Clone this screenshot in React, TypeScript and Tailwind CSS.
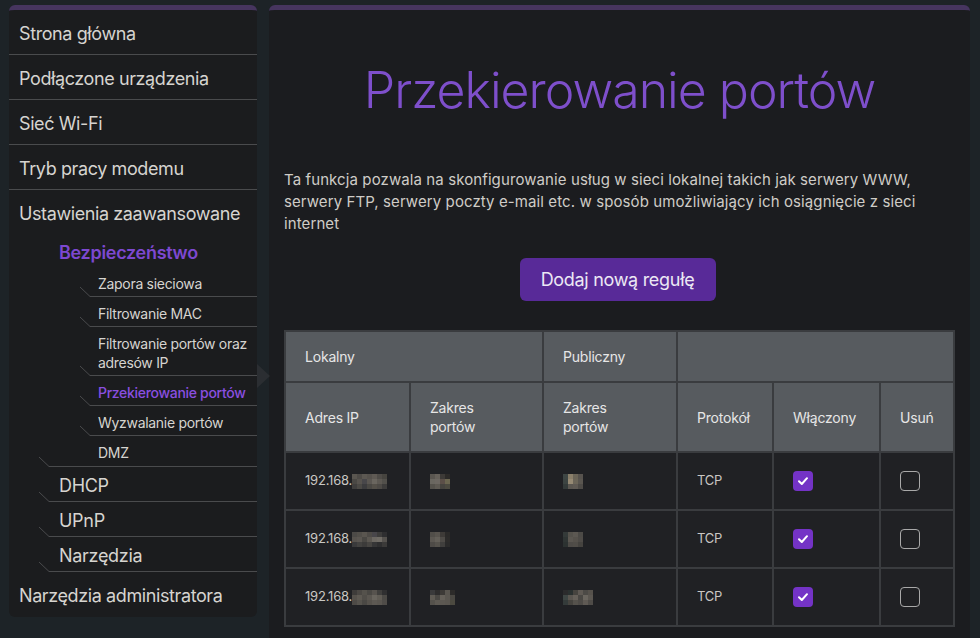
import React from "react";

const font = { fontFamily: "Inter, 'Noto Sans', sans-serif" };

type Mosaic = string[][];

const ipBlur: Mosaic[] = [
  [
    ["#5a5650", "#4e4b47", "#5c5852", "#56524d", "#5f5a54", "#4f4c48", "#46443f"],
    ["#4a4844", "#57534e", "#48474a", "#5b5752", "#6a665f", "#5d5953", "#52504b"],
    ["#3f3e3d", "#4b4945", "#3c3c3e", "#4a4844", "#545049", "#4d4a46", "#3d3c3b"],
  ],
  [
    ["#4c4a47", "#524f4a", "#5a5650", "#4e4b47", "#48464a", "#3d3c3b", "#2e2e30"],
    ["#57534e", "#5b5752", "#4a4844", "#5c5852", "#6c6862", "#706c66", "#55524e"],
    ["#3a3a3b", "#434240", "#3c3b3a", "#474542", "#363637", "#2f2f30", "#3b3a39"],
  ],
  [
    ["#3e3c3a", "#4b4844", "#55524c", "#4a4844", "#57534e", "#403f3d", "#2f2f30"],
    ["#56524c", "#5e5a53", "#514e49", "#5b5751", "#69655e", "#605c55", "#4c4a46"],
    ["#4d4a46", "#56534d", "#4a4844", "#56524c", "#5d5953", "#5a5650", "#4f4c48"],
  ],
];

const localBlur: Mosaic[] = [
  [
    ["#5a5650", "#66615a", "#3d3a37", "#2c2a28"],
    ["#6a6760", "#6d6862", "#5b4f48", "#6b6650"],
    ["#55524c", "#5e5a53", "#46443f", "#4c4a40"],
  ],
  [
    ["#514e49", "#58544e", "#3e3b38", "#2b2a29"],
    ["#5c5852", "#646059", "#4e4b47", "#2c2b2a"],
    ["#4e4b47", "#55524c", "#403f3d", "#2a2a2a"],
  ],
  [
    ["#3a3a3b", "#2e2d2d", "#3d3a37", "#5a5650", "#2c2b2a"],
    ["#5f5b54", "#4a4844", "#66615a", "#5b5751", "#4a4843"],
    ["#55524c", "#5e5a53", "#5c5852", "#5a5650", "#4c4a40"],
  ],
];

const publicBlur: Mosaic[] = [
  [
    ["#3e4644", "#8a7f6a", "#6b6558", "#57534e"],
    ["#3c4442", "#968a74", "#6c6659", "#5a5650"],
    ["#343b3a", "#5b5751", "#5f5a54", "#4e4b47"],
  ],
  [
    ["#343a39", "#55524c", "#5c5852", "#4c4a46"],
    ["#2f3534", "#5b5751", "#56524c", "#4e4b47"],
    ["#2c3231", "#4e4b47", "#504d48", "#45433f"],
  ],
  [
    ["#2b2b2c", "#2a3130", "#46443f", "#5f5a54", "#4c4a46", "#56524c"],
    ["#3e4644", "#5a5650", "#66615a", "#4a4844", "#6a665f", "#5b5751"],
    ["#343b3a", "#46443f", "#55524c", "#4e4b47", "#5f5a54", "#4f4c48"],
  ],
];

const Blur: React.FC<{ cells: Mosaic }> = ({ cells }) => (
  <span className="inline-flex flex-col align-middle">
    {cells.map((row, i) => (
      <span key={i} className="flex">
        {row.map((c, j) => (
          <span key={j} className="block w-[5px] h-[5px]" style={{ background: c }} />
        ))}
      </span>
    ))}
  </span>
);

// bottom rule of a tree row with the small slanted tick on its left
const TreeRule: React.FC<{ left: string }> = ({ left }) => (
  <svg
    className={`absolute bottom-[-1px] ${left} w-[12px] h-[11px]`}
    viewBox="0 0 12 11"
  >
    <line x1="1" y1="1" x2="11" y2="10.5" stroke="#4a4b4d" strokeWidth="1" />
  </svg>
);

const TopItem: React.FC<{ label: string; last?: boolean }> = ({ label, last }) => (
  <div
    className={`h-[45px] flex items-center px-[10px] text-[18px] tracking-[-0.4px] whitespace-nowrap text-[#d6d4d0] ${
      last ? "pt-[1px]" : "pt-[3px] border-b border-[#4a4b4d]"
    }`}
  >
    {label}
  </div>
);

const SubSubItem: React.FC<{ label: React.ReactNode; active?: boolean; rule?: boolean; tall?: boolean }> = ({
  label,
  active,
  rule = true,
  tall,
}) => (
  <div
    className={`relative ml-[81px] ${tall ? "h-[49px]" : "h-[30px]"} flex items-center pl-2 pt-[3px] text-[14px] leading-[19px] tracking-[-0.3px] whitespace-nowrap ${
      active ? "text-[#8a4fe0] font-medium" : "text-[#d6d4d0]"
    } ${rule ? "border-b border-[#4a4b4d]" : ""}`}
  >
    <span>{label}</span>
    {rule && <TreeRule left="left-[-11px]" />}
    {active && (
      <span className="absolute right-[-13px] top-[-12px] w-0 h-0 border-y-[12px] border-y-transparent border-l-[13px] border-l-[#2b2e32]" />
    )}
  </div>
);

const SubItem: React.FC<{ label: string }> = ({ label }) => (
  <div className="relative ml-[40px] h-[35px] flex items-center pl-[10px] pt-[2px] text-[18px] tracking-[-0.3px] text-[#d6d4d0] border-b border-[#4a4b4d]">
    {label}
    <TreeRule left="left-[-11px]" />
  </div>
);

const Sidebar = () => (
  <aside
    className="w-[248px] shrink-0 self-start bg-[#1b1c1e] rounded-[6px] border-t-[5px] border-[#46355f]"
    style={font}
  >
    <TopItem label="Strona główna" />
    <TopItem label="Podłączone urządzenia" />
    <TopItem label="Sieć Wi-Fi" />
    <TopItem label="Tryb pracy modemu" />
    <TopItem label="Ustawienia zaawansowane" last />

    <div className="relative ml-[40px] border-b border-[#4a4b4d]">
      <div className="h-[32px] flex items-center pl-[10px] pt-[3px] text-[18px] font-semibold tracking-[-0.3px] text-[#7d48d0]">
        Bezpieczeństwo
      </div>
      <div className="-ml-[40px]">
        <SubSubItem label="Zapora sieciowa" />
        <SubSubItem label="Filtrowanie MAC" />
        <SubSubItem
          tall
          label={
            <>
              Filtrowanie portów oraz
              <br />
              adresów IP
            </>
          }
        />
        <SubSubItem label="Przekierowanie portów" active />
        <SubSubItem label="Wyzwalanie portów" />
        <SubSubItem label="DMZ" rule={false} />
      </div>
      <TreeRule left="left-[-11px]" />
    </div>
    <SubItem label="DHCP" />
    <SubItem label="UPnP" />
    <SubItem label="Narzędzia" />
    <TopItem label="Narzędzia administratora" last />
  </aside>
);

const Check: React.FC<{ on: boolean }> = ({ on }) =>
  on ? (
    <span className="inline-flex items-center justify-center w-[20px] h-[20px] rounded-[4px] bg-[#7433c6] align-middle">
      <svg viewBox="0 0 12 12" className="w-[12px] h-[12px]">
        <path d="M2 6.3 L4.8 9 L10 3.2" fill="none" stroke="#fff" strokeWidth="2" strokeLinecap="round" strokeLinejoin="round" />
      </svg>
    </span>
  ) : (
    <span className="inline-block w-[20px] h-[20px] rounded-[4px] border-[1.5px] border-[#a9a9a9] align-middle" />
  );

const rows = [0, 1, 2];

const th = "border-2 border-[#3a3c3f] bg-[#575b5f] text-left font-normal text-[14px] leading-[19px] tracking-[-0.2px] text-[#e6e6e6] pl-[19px] pr-2";
const td = "border-2 border-[#3a3c3f] bg-[#202124] text-[13px] tracking-[-0.2px] text-[#c9c7c3] pl-[19px] h-[58px]";

const Main = () => (
  <main
    className="flex-1 bg-[#1b1c1f] rounded-t-[6px] border-t-[5px] border-[#46355f] px-[15px] pb-10"
    style={font}
  >
    <h1 className="mt-[50px] text-center text-[50px] leading-[60px] font-light tracking-[-1px] text-[#7e4fcb]">
      Przekierowanie portów
    </h1>
    <p className="mt-[49px] text-[15px] leading-[22px] tracking-[0.1px] text-[#cfccc7]">
      Ta funkcja pozwala na skonfigurowanie usług w sieci lokalnej takich jak serwery WWW,
      <br />
      serwery FTP, serwery poczty e-mail etc. w sposób umożliwiający ich osiągnięcie z sieci
      <br />
      internet
    </p>
    <div className="mt-[23px] flex justify-center">
      <button className="w-[196px] h-[43px] rounded-[6px] bg-[#582a98] text-[18px] tracking-[-0.3px] text-[#ece8f4] mr-[4px]">
        Dodaj nową regułę
      </button>
    </div>
    <table className="mt-[29px] w-[669px] table-fixed border-collapse">
      <colgroup>
        <col className="w-[125px]" />
        <col className="w-[133px]" />
        <col className="w-[134px]" />
        <col className="w-[96px]" />
        <col className="w-[107px]" />
        <col className="w-[74px]" />
      </colgroup>
      <thead>
        <tr className="h-[51px]">
          <th colSpan={2} className={th}>Lokalny</th>
          <th className={th}>Publiczny</th>
          <th colSpan={3} className={th}></th>
        </tr>
        <tr className="h-[70px]">
          <th className={th}>Adres IP</th>
          <th className={th}>
            Zakres
            <br />
            portów
          </th>
          <th className={th}>
            Zakres
            <br />
            portów
          </th>
          <th className={th}>Protokół</th>
          <th className={th}>Włączony</th>
          <th className={th}>Usuń</th>
        </tr>
      </thead>
      <tbody>
        {rows.map((i) => (
          <tr key={i}>
            <td className={td}>
              <span className="inline-flex items-center">
                192.168.
                <Blur cells={ipBlur[i]} />
              </span>
            </td>
            <td className={td}>
              <Blur cells={localBlur[i]} />
            </td>
            <td className={td}>
              <Blur cells={publicBlur[i]} />
            </td>
            <td className={td}>TCP</td>
            <td className={td}>
              <Check on />
            </td>
            <td className={td}>
              <Check on={false} />
            </td>
          </tr>
        ))}
      </tbody>
    </table>
  </main>
);

export default function App() {
  return (
    <div className="h-[638px] overflow-hidden bg-[#1d2327] flex gap-[12px] pt-[5px] pl-[9px] pr-[11px]">
      <Sidebar />
      <Main />
    </div>
  );
}
